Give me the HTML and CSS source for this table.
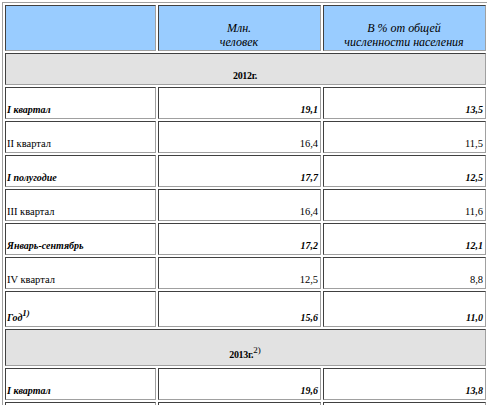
FILE: index.html
```html
<!DOCTYPE html>
<html>
<head>
<meta charset="utf-8">
<link rel="stylesheet" href="styles.css">
</head>
<body>
<table class="tbl">
  <tr class="head">
    <td class="c1"></td>
    <td class="c2"><i>Млн.<br>человек</i></td>
    <td class="c3"><i>В % от общей<br>численности населения</i></td>
  </tr>
  <tr class="year"><td colspan="3"><b>2012г.</b></td></tr>
  <tr class="em"><td>I квартал</td><td class="num">19,1</td><td class="num">13,5</td></tr>
  <tr><td>II квартал</td><td class="num">16,4</td><td class="num">11,5</td></tr>
  <tr class="em"><td>I полугодие</td><td class="num">17,7</td><td class="num">12,5</td></tr>
  <tr><td>III квартал</td><td class="num">16,4</td><td class="num">11,6</td></tr>
  <tr class="em"><td>Январь-сентябрь</td><td class="num">17,2</td><td class="num">12,1</td></tr>
  <tr><td>IV квартал</td><td class="num">12,5</td><td class="num">8,8</td></tr>
  <tr class="em tall1"><td>Год<sup>1)</sup></td><td class="num">15,6</td><td class="num">11,0</td></tr>
  <tr class="year tall2"><td colspan="3"><b>2013г.</b><sup>2)</sup></td></tr>
  <tr class="em"><td>I квартал</td><td class="num">19,6</td><td class="num">13,8</td></tr>
  <tr class="last"><td></td><td class="num"></td><td class="num"></td></tr>
</table>
</body>
</html>
```
FILE: styles.css
```css
html {
  overflow: hidden;
}
html, body {
  margin: 0;
  padding: 0;
  background: #ffffff;
}
body {
  padding: 2px 0 0 2px;
  font-family: "Liberation Serif", Tinos, "Times New Roman", serif;
  font-size: 10.5px;
  color: #000;
}
.tbl {
  border-collapse: separate;
  border-spacing: 2px;
  border-style: solid;
  border-width: 1px;
  border-color: #a0a0a0 #404040 #404040 #a0a0a0;
  width: 487px;
  table-layout: fixed;
  font: inherit;
}
.tbl td {
  border-style: solid;
  border-width: 1px;
  border-color: #404040 #a0a0a0 #a0a0a0 #404040;
  padding: 1px 2px 2px 1px;
  vertical-align: bottom;
  height: 32px;
  box-sizing: border-box;
  line-height: 12px;
}
.tbl td.c1 { width: 151px; }
.tbl td.c2 { width: 163px; }
.head td {
  background: #99ccff;
  text-align: center;
  height: 46px;
  font-size: 12px;
  line-height: 14px;
  padding-bottom: 1px;
}
.year td {
  background: #e2e2e2;
  text-align: center;
  font-size: 10px;
}
.year b {
  letter-spacing: -0.3px;
}
.tall1 td { height: 36px; }
.tall2 td { height: 37px; padding-bottom: 4px; }
.em td {
  font-weight: bold;
  font-style: italic;
  font-size: 10px;
}
.num {
  text-align: right;
}
sup {
  font-size: 9px;
  line-height: 0;
  vertical-align: 5px;
  letter-spacing: 0;
}
```
